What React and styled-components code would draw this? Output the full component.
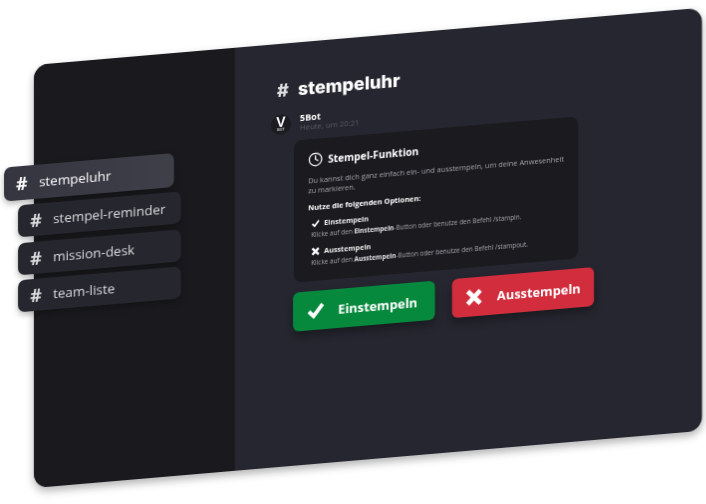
import React from "react";
import styled, { createGlobalStyle } from "styled-components";
import { Clock } from "lucide-react";

const Global = createGlobalStyle`
  html, body { margin: 0; padding: 0; background: #fff; }
  body { font-family: "Open Sans", "Liberation Sans", sans-serif; overflow: hidden; }
`;

const Page = styled.div`
  width: 706px;
  height: 504px;
  padding: 64.5px 0 0 34px;
  box-sizing: border-box;
  overflow: hidden;
`;

const Panel = styled.div`
  display: flex;
  width: 668px;
  height: 423px;
  border-radius: 14px;
  background: #25262f;
  box-shadow: 0 4px 8px rgba(0, 0, 0, 0.3);
  transform: skewY(-4.9deg);
  transform-origin: 0 0;
  will-change: transform;
`;

const Sidebar = styled.div`
  display: flex;
  flex-direction: column;
  flex: 0 0 201px;
  gap: 5.5px;
  padding-top: 99.5px;
  box-sizing: border-box;
  border-radius: 14px 0 0 14px;
  background: #1a1a1e;
`;

const Channel = styled.div`
  display: flex;
  align-items: center;
  box-sizing: border-box;
  width: ${p => (p.$active ? "170px" : "163px")};
  height: ${p => (p.$active ? "34px" : "32px")};
  margin-left: ${p => (p.$active ? "-30px" : "-16px")};
  padding-left: 12px;
  border-radius: 7px;
  background: ${p => (p.$active ? "linear-gradient(90deg, #353540, #3f3f4a)" : "#25262e")};
  color: ${p => (p.$active ? "#fff" : "#dcdcde")};
  box-shadow: 0 3px 6px rgba(0, 0, 0, 0.28);
`;

const Hash = styled.span`
  width: 23px;
  font-size: 18px;
  font-weight: 700;
`;

const ChannelName = styled.span`
  font-size: 13.4px;
  font-weight: 500;
`;

const Main = styled.div`
  flex: 1;
  padding: 33.5px 0 0 42px;
`;

const Title = styled.h1`
  display: flex;
  align-items: baseline;
  gap: 9px;
  margin: 0 0 10px;
  font-family: Inter, "Liberation Sans", sans-serif;
  font-size: 18px;
  line-height: 26px;
  font-weight: 800;
  color: #fff;
`;

const TitleHash = styled.span`
  color: #dcdce0;
`;

const Bot = styled.div`
  display: flex;
  align-items: center;
  gap: 9px;
  height: 22px;
  margin-left: -6px;
`;

const Avatar = styled.div`
  display: flex;
  flex-direction: column;
  align-items: center;
  justify-content: center;
  width: 20px;
  height: 20px;
  border-radius: 50%;
  background: #1b1b20;
  color: #fff;
`;

const AvatarV = styled.span`
  font-family: "Liberation Sans", sans-serif;
  font-size: 14px;
  line-height: 11px;
  font-weight: 700;
`;

const AvatarBot = styled.span`
  font-family: "Liberation Sans", sans-serif;
  font-size: 3.5px;
  line-height: 4px;
  font-weight: 700;
  color: #c4c4c4;
`;

const BotName = styled.div`
  font-size: 9px;
  line-height: 10px;
  font-weight: 700;
  color: #fff;
`;

const BotTime = styled.div`
  font-size: 7.7px;
  line-height: 9px;
  color: #5a5b64;
`;

const Card = styled.div`
  box-sizing: border-box;
  width: 284px;
  height: 142px;
  margin: 6.5px 0 0 17px;
  padding: 13px 14px 0;
  border-radius: 8px;
  background: #1a1a1f;
`;

const CardHead = styled.div`
  display: flex;
  align-items: center;
  gap: 5px;
  color: #fff;
  font-size: 10.2px;
  font-weight: 700;
`;

const Desc = styled.p`
  margin: 8px 0 0;
  font-size: 7.4px;
  line-height: 10px;
  color: #a2a2a8;
`;

const OptionsHead = styled.div`
  margin-top: 8px;
  font-size: 7.4px;
  line-height: 9px;
  font-weight: 700;
  color: #fff;
`;

const Option = styled.div`
  margin: 6px 0 0 3px;
`;

const OptionName = styled.div`
  display: flex;
  align-items: center;
  gap: 4px;
  margin-bottom: 2px;
  font-size: 7.2px;
  line-height: 10px;
  font-weight: 700;
  color: #f0f0f0;
`;

const OptionText = styled.div`
  font-size: 6.4px;
  line-height: 10px;
  color: #a4a4aa;

  b {
    color: #e4e4e4;
  }
`;

const Buttons = styled.div`
  display: flex;
  gap: 17px;
  margin: 10px 0 0 16px;
`;

const Button = styled.div`
  display: flex;
  align-items: center;
  box-sizing: border-box;
  width: 142px;
  height: 39px;
  padding-left: 13px;
  gap: ${p => (p.$red ? "14px" : "13px")};
  border-radius: 6px;
  background: ${p => (p.$red ? "#d22d3d" : "#06893c")};
  color: #fff;
  font-size: 12.8px;
  font-weight: 700;
  box-shadow: 0 5px 9px rgba(0, 0, 0, 0.3);
`;

const CheckIcon = ({ size }) => (
  <svg width={size} height={size} viewBox="0 0 20 20">
    <path d="M3 11l5 5L17.5 4" fill="none" stroke="#fff" strokeWidth="4" />
  </svg>
);

const CrossIcon = ({ size }) => (
  <svg width={size} height={size} viewBox="0 0 20 20">
    <path d="M3 3l14 14M17 3L3 17" fill="none" stroke="#fff" strokeWidth="5" />
  </svg>
);

const channels = ["stempeluhr", "stempel-reminder", "mission-desk", "team-liste"];

export default function App() {
  return (
    <Page>
      <Global />
      <Panel>
        <Sidebar>
          {channels.map((name, i) => (
            <Channel key={name} $active={i === 0}>
              <Hash>#</Hash>
              <ChannelName>{name}</ChannelName>
            </Channel>
          ))}
        </Sidebar>
        <Main>
          <Title>
            <TitleHash>#</TitleHash> stempeluhr
          </Title>
          <Bot>
            <Avatar>
              <AvatarV>V</AvatarV>
              <AvatarBot>BOT</AvatarBot>
            </Avatar>
            <div>
              <BotName>5Bot</BotName>
              <BotTime>Heute, um 20:21</BotTime>
            </div>
          </Bot>
          <Card>
            <CardHead>
              <Clock size={15} strokeWidth={2} />
              Stempel-Funktion
            </CardHead>
            <Desc>
              Du kannst dich ganz einfach ein- und ausstempeln, um deine Anwesenheit zu markieren.
            </Desc>
            <OptionsHead>Nutze die folgenden Optionen:</OptionsHead>
            <Option>
              <OptionName>
                <CheckIcon size={9} />
                Einstempeln
              </OptionName>
              <OptionText>
                Klicke auf den <b>Einstempeln</b>-Button oder benutze den Befehl /stampin.
              </OptionText>
            </Option>
            <Option>
              <OptionName>
                <CrossIcon size={9} />
                Ausstempeln
              </OptionName>
              <OptionText>
                Klicke auf den <b>Ausstempeln</b>-Button oder benutze den Befehl /stampout.
              </OptionText>
            </Option>
          </Card>
          <Buttons>
            <Button>
              <CheckIcon size={19} />
              Einstempeln
            </Button>
            <Button $red>
              <CrossIcon size={18} />
              Ausstempeln
            </Button>
          </Buttons>
        </Main>
      </Panel>
    </Page>
  );
}
